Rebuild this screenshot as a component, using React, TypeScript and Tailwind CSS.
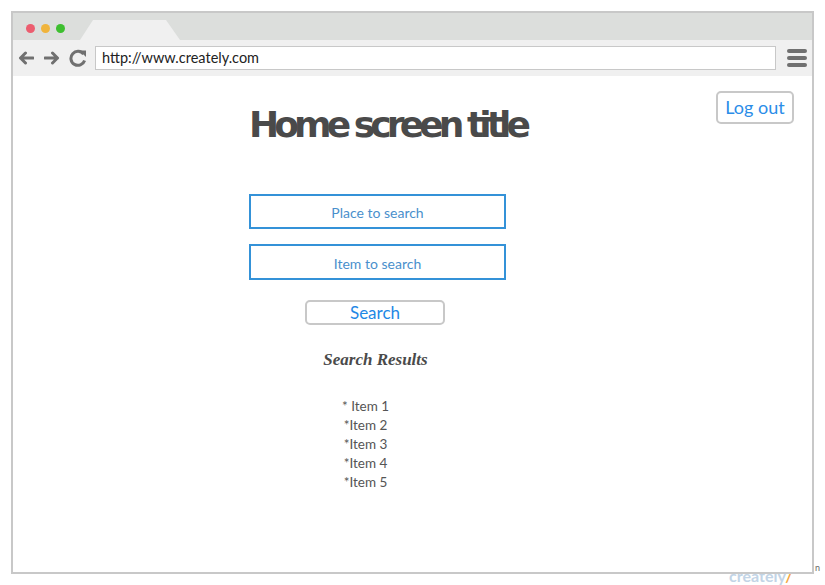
import React from "react";

export default function App() {
  const items = ["* Item 1", "*Item 2", "*Item 3", "*Item 4", "*Item 5"];
  return (
    <div className="relative w-[825px] h-[585px] overflow-hidden bg-white pl-[11px] pt-[11px]" style={{ fontFamily: "Lato, 'Open Sans', sans-serif" }}>
      <div className="absolute left-[729px] top-[568px] text-[16px] font-bold leading-[16px] text-[#c2d4e6]">
        creately<span className="text-[#f5a742]">/</span>
      </div>
      <div className="relative z-10 flex h-[563px] w-[803px] flex-col border-2 border-[#c8c8c8] bg-white">
        {/* tab bar */}
        <div className="flex h-[27px] shrink-0 bg-[#dcdedc]">
          <div className="ml-[13px] mt-[11px] flex gap-[6px] self-start">
            <span className="block h-[9px] w-[9px] rounded-full bg-[#ec5d6f]" />
            <span className="block h-[9px] w-[9px] rounded-full bg-[#f0b43c]" />
            <span className="block h-[9px] w-[9px] rounded-full bg-[#3dbf2f]" />
          </div>
          <svg className="ml-[15px] self-end" width="100" height="20" viewBox="0 0 100 20">
            <path d="M0 20 L13 0 L86 0 L100 20 Z" fill="#f0f0f0" />
          </svg>
        </div>
        {/* toolbar */}
        <div className="flex h-[36px] shrink-0 items-center bg-[#f0f0f0]">
          <svg className="ml-[5px]" width="16" height="14" viewBox="0 0 16 14">
            <path d="M15 7 H2.5 M7.5 2 L2.5 7 L7.5 12" fill="none" stroke="#707070" strokeWidth="3" strokeLinecap="round" strokeLinejoin="round" />
          </svg>
          <svg className="ml-[10px]" width="16" height="14" viewBox="0 0 16 14">
            <path d="M1 7 H13.5 M8.5 2 L13.5 7 L8.5 12" fill="none" stroke="#707070" strokeWidth="3" strokeLinecap="round" strokeLinejoin="round" />
          </svg>
          <svg className="ml-[9px]" width="18" height="18" viewBox="0 0 18 18">
            <path d="M14.6 5.2 A7 7 0 1 0 15.6 11.5" fill="none" stroke="#707070" strokeWidth="3" strokeLinecap="butt" />
            <path d="M10.5 1.5 L17 1.5 L17 8 Z" fill="#707070" />
          </svg>
          <div className="ml-[8px] flex h-[24px] w-[681px] items-center border border-[#c8c8c8] bg-white pl-[6px] text-[14.5px] text-[#222]">
            http://www.creately.com
          </div>
          <div className="ml-[11px] flex w-[20px] flex-col gap-[3px]">
            <span className="block h-[4px] rounded-full bg-[#707070]" />
            <span className="block h-[4px] rounded-full bg-[#707070]" />
            <span className="block h-[4px] rounded-full bg-[#707070]" />
          </div>
        </div>
        {/* content */}
        <div className="relative flex-1">
          <button className="absolute right-[18px] top-[15px] flex h-[33px] w-[78px] items-center justify-center rounded-[5px] border-2 border-[#c8c8c8] bg-white text-[18px] text-[#2b8de8]">
            Log out
          </button>
          <div className="ml-[236px] flex w-[257px] flex-col items-center">
            <h1
              className="mt-[31px] self-start whitespace-nowrap text-[36px] font-bold leading-[36px] tracking-[-4.9px] text-[#4a4a4a]"
              style={{ fontFamily: "'DejaVu Sans', Verdana, sans-serif" }}
            >
              Home screen title
            </h1>
            <div className="mt-[51px] flex h-[35px] w-[257px] items-center justify-center border-2 border-[#3492d8] pt-[1px] text-[14px] text-[#4a8fcc]">
              Place to search
            </div>
            <div className="mt-[15px] flex h-[36px] w-[257px] items-center justify-center border-2 border-[#3492d8] pt-[2px] text-[14px] text-[#4a8fcc]">
              Item to search
            </div>
            <button className="mr-[5px] mt-[20px] flex h-[25px] w-[140px] items-center justify-center rounded-[5px] border-2 border-[#c8c8c8] bg-white text-[17px] text-[#1e88e5]">
              Search
            </button>
            <div
              className="mr-[4px] mt-[25px] text-[17px] font-bold italic leading-[20px] text-[#4a4a4a]"
              style={{ fontFamily: "'Liberation Serif', 'Times New Roman', serif" }}
            >
              Search Results
            </div>
            <div className="mt-[27px] flex w-full flex-col items-center pr-[24px] text-[13.5px] leading-[19px] text-[#555]">
              {items.map((t) => (
                <div key={t} className="whitespace-pre">{t}</div>
              ))}
            </div>
          </div>
        </div>
      </div>
      <div className="absolute left-[815px] top-[563px] text-[9px] leading-[10px] text-[#666]">n</div>
    </div>
  );
}
